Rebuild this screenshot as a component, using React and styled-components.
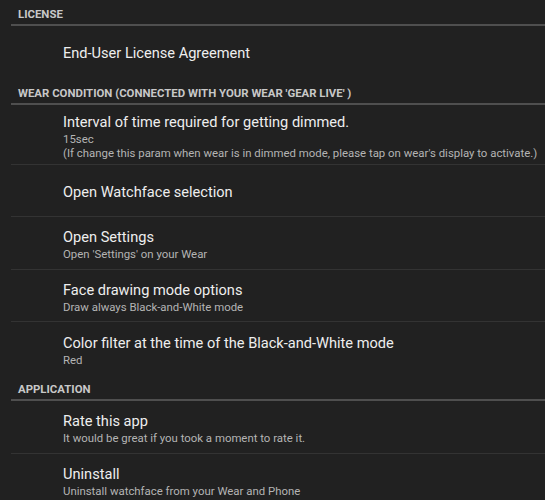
import React from 'react';
import styled, { createGlobalStyle } from 'styled-components';

const GlobalStyle = createGlobalStyle`
  html, body {
    margin: 0;
    padding: 0;
    background: #212121;
  }
  body {
    font-family: Roboto, "Noto Sans", sans-serif;
    -webkit-font-smoothing: antialiased;
  }
`;

const sections = [
  {
    title: 'LICENSE',
    items: [{ title: 'End-User License Agreement' }],
  },
  {
    title: "WEAR CONDITION (CONNECTED WITH YOUR WEAR 'GEAR LIVE' )",
    items: [
      {
        title: 'Interval of time required for getting dimmed.',
        summary: [
          '15sec',
          "(If change this param when wear is in dimmed mode, please tap on wear's display to activate.)",
        ],
      },
      { title: 'Open Watchface selection' },
      { title: 'Open Settings', summary: ["Open 'Settings' on your Wear"] },
      { title: 'Face drawing mode options', summary: ['Draw always Black-and-White mode'] },
      { title: 'Color filter at the time of the Black-and-White mode', summary: ['Red'] },
    ],
  },
  {
    title: 'APPLICATION',
    items: [
      { title: 'Rate this app', summary: ['It would be great if you took a moment to rate it.'] },
      { title: 'Uninstall', summary: ['Uninstall watchface from your Wear and Phone'] },
    ],
  },
];

function App() {
  return (
    <>
      <GlobalStyle />
      <Screen>
        {sections.map((section) => (
          <Section key={section.title}>
            <Header>{section.title}</Header>
            {section.items.map((item, i) => (
              <Row key={item.title} last={i === section.items.length - 1}>
                <Title>{item.title}</Title>
                {item.summary?.map((line) => (
                  <Summary key={line}>{line}</Summary>
                ))}
              </Row>
            ))}
          </Section>
        ))}
      </Screen>
    </>
  );
}

export default App;

const Screen = styled.div`
  height: 500px;
  overflow: hidden;
  background: #212121;
`;

const Section = styled.div`
  display: flex;
  flex-direction: column;
`;

const Header = styled.div`
  margin-left: 11px;
  padding: 7px 0 3px 7px;
  border-bottom: 2px solid #4f4f4f;
  color: #c8c8c8;
  font-size: 11.4px;
  font-weight: bold;
  line-height: 14px;
  white-space: nowrap;
`;

const Row = styled.div`
  display: flex;
  flex-direction: column;
  justify-content: center;
  box-sizing: content-box;
  min-height: 42.6px;
  margin-left: 11px;
  padding: 5px 0 4px 52px;
  border-bottom: 1px solid ${(p) => (p.last ? 'transparent' : '#333333')};
`;

const Title = styled.div`
  padding-top: 2px;
  color: #eeeeee;
  font-size: 14.6px;
  line-height: 20px;
  white-space: nowrap;
`;

const Summary = styled.div`
  color: #b4b4b4;
  font-size: 11.4px;
  line-height: 14px;
  white-space: nowrap;
`;
